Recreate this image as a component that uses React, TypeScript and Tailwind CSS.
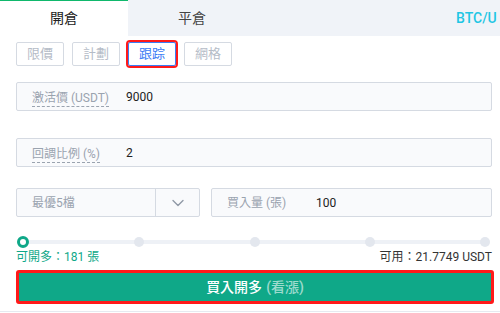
import { ChevronDown } from "lucide-react";

const orderTypes = [
  { label: "限價", active: false },
  { label: "計劃", active: false },
  { label: "跟踪", active: true },
  { label: "網格", active: false },
];

const Field = ({ label, value }: { label: string; value: string }) => (
  <div className="flex items-center h-[29px] bg-[#f9fafc] border border-[#d5dae2] rounded-[2px] px-[15px]">
    <span className="w-[94px] shrink-0">
      <span className="text-[12px] text-[#9aa3af] border-b border-dashed border-[#9aa3af] leading-[15px] inline-block">
        {label}
      </span>
    </span>
    <span className="text-[12px] text-[#222]">{value}</span>
  </div>
);

export default function App() {
  return (
    <div className="w-[500px] h-[313px] bg-white overflow-hidden font-['Roboto','Noto_Sans_CJK_TC',sans-serif] relative">
      {/* onglets */}
      <div className="flex h-[36px]">
        <div className="w-[128px] border-t border-[#0fb86c] flex items-center justify-center text-[14px] text-[#222]">
          開倉
        </div>
        <div className="w-[128px] bg-[#f0f3f8] flex items-center justify-center text-[14px] text-[#444]">
          平倉
        </div>
        <div className="flex-1 bg-[#f0f3f8] flex items-center pl-[200px] overflow-hidden whitespace-nowrap text-[14px] font-medium text-[#1fc6e4]">
          BTC/U
        </div>
      </div>

      {/* types d'ordre */}
      <div className="flex gap-[8px] pl-[16px] mt-[6px]">
        {orderTypes.map((o, idx) => (
          <button
            key={idx}
            className={`h-[24px] w-[48px] flex items-center justify-center text-[13px] rounded-[2px] ${
              o.active
                ? "border border-[#3b7cf5] outline-2 outline-[#ff1a1a] text-[#3b7cf5]"
                : "border border-[#d5dae2] text-[#b5bcc7]"
            }`}
          >
            {o.label}
          </button>
        ))}
      </div>

      <div className="px-[16px] pr-[8px]">
        <div className="mt-[16px]">
          <Field label="激活價 (USDT)" value="9000" />
        </div>
        <div className="mt-[27px]">
          <Field label="回調比例 (%)" value="2" />
        </div>

        {/* ligne prix / quantité */}
        <div className="flex gap-[11px] mt-[21px] h-[29px]">
          <div className="w-[184px] flex bg-[#f9fafc] border border-[#d5dae2] rounded-[2px]">
            <div className="w-[139px] flex items-center pl-[15px] text-[12px] text-[#9aa3af] border-r border-[#d5dae2]">
              最優5檔
            </div>
            <div className="flex-1 flex items-center justify-center text-[#8f98a5]">
              <ChevronDown size={20} strokeWidth={1.6} />
            </div>
          </div>
          <div className="flex-1 flex items-center bg-[#f9fafc] border border-[#d5dae2] rounded-[2px] pl-[15px]">
            <span className="w-[89px] text-[12px] text-[#9aa3af]">買入量 (張)</span>
            <span className="text-[12px] text-[#222]">100</span>
          </div>
        </div>

        {/* slider */}
        <div className="relative mt-[19px] h-[12px] pl-[1px] pr-[2px]">
          <div className="absolute left-[6px] right-[4px] top-[4px] h-[4px] bg-[#eef1f6] rounded" />
          <div className="relative flex justify-between items-center h-[12px]">
            <span className="w-[12px] h-[12px] rounded-full border-[3px] border-[#0fa888] bg-white" />
            <span className="w-[10px] h-[10px] rounded-full bg-[#e3e7ee]" />
            <span className="w-[10px] h-[10px] rounded-full bg-[#e3e7ee]" />
            <span className="w-[10px] h-[10px] rounded-full bg-[#e3e7ee]" />
            <span className="w-[10px] h-[10px] rounded-full bg-[#e3e7ee]" />
          </div>
        </div>

        <div className="flex justify-between items-center text-[12px] leading-[14px] mt-[2px]">
          <span className="text-[#0fa888]">可開多：181 張</span>
          <span className="text-[#333]">可用：21.7749 USDT</span>
        </div>

        <button className="mt-[6px] w-[478px] h-[34px] bg-[#0fa888] border-[3px] border-[#ff1a1a] rounded-[3px] flex items-center justify-center text-[14px] font-medium text-white">
          買入開多 <span className="ml-[4px] text-white/60">(看漲)</span>
        </button>
      </div>

      <div className="absolute left-0 right-0 bottom-[1px] h-[1px] bg-[#e6eaf0]" />
    </div>
  );
}
